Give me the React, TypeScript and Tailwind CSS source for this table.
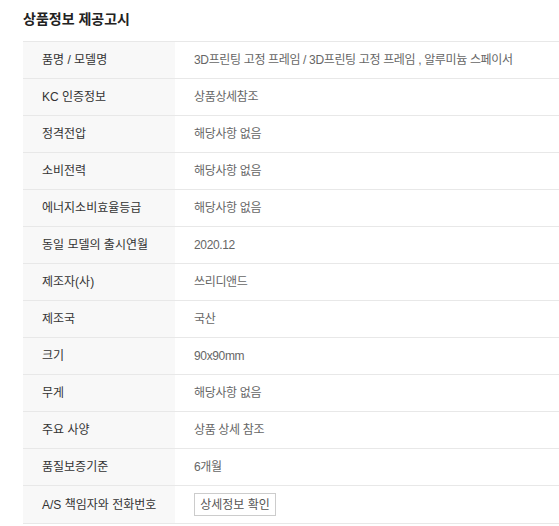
import React from "react";

const rows: [string, string][] = [
  ["품명 / 모델명", "3D프린팅 고정 프레임 / 3D프린팅 고정 프레임 , 알루미늄 스페이서"],
  ["KC 인증정보", "상품상세참조"],
  ["정격전압", "해당사항 없음"],
  ["소비전력", "해당사항 없음"],
  ["에너지소비효율등급", "해당사항 없음"],
  ["동일 모델의 출시연월", "2020.12"],
  ["제조자(사)", "쓰리디앤드"],
  ["제조국", "국산"],
  ["크기", "90x90mm"],
  ["무게", "해당사항 없음"],
  ["주요 사양", "상품 상세 참조"],
  ["품질보증기준", "6개월"],
];

export default function App() {
  return (
    <div
      className="w-[559px] h-[526px] bg-white pl-[23px] overflow-hidden"
      style={{ fontFamily: '"Liberation Sans", "Noto Sans CJK KR", Arial, sans-serif' }}
    >
      <div className="h-[41px] flex items-center">
        <h2 className="text-[14px] font-bold text-[#222] leading-none -mt-[3px]">상품정보 제공고시</h2>
      </div>
      <div className="border-t border-[#e8e8e8]">
        {rows.map(([k, v]) => (
          <div key={k} className="flex h-[37px] border-b border-[#e8e8e8] text-[12px]">
            <div className="w-[152px] shrink-0 bg-[#f8f8f8] pl-[19px] flex items-center text-[#333]">{k}</div>
            <div className="flex-1 pl-[19px] flex items-center text-[#666] whitespace-nowrap overflow-hidden tracking-[-0.35px]">{v}</div>
          </div>
        ))}
        <div className="flex h-[38px] border-b border-[#e8e8e8] text-[12px]">
          <div className="w-[152px] shrink-0 bg-[#f8f8f8] pl-[19px] flex items-center text-[#333]">A/S 책임자와 전화번호</div>
          <div className="flex-1 pl-[19px] flex items-center">
            <button className="w-[82px] h-[23px] border border-[#ccc] bg-white text-[#555] text-[12px] flex items-center justify-center">
              상세정보 확인
            </button>
          </div>
        </div>
      </div>
    </div>
  );
}
